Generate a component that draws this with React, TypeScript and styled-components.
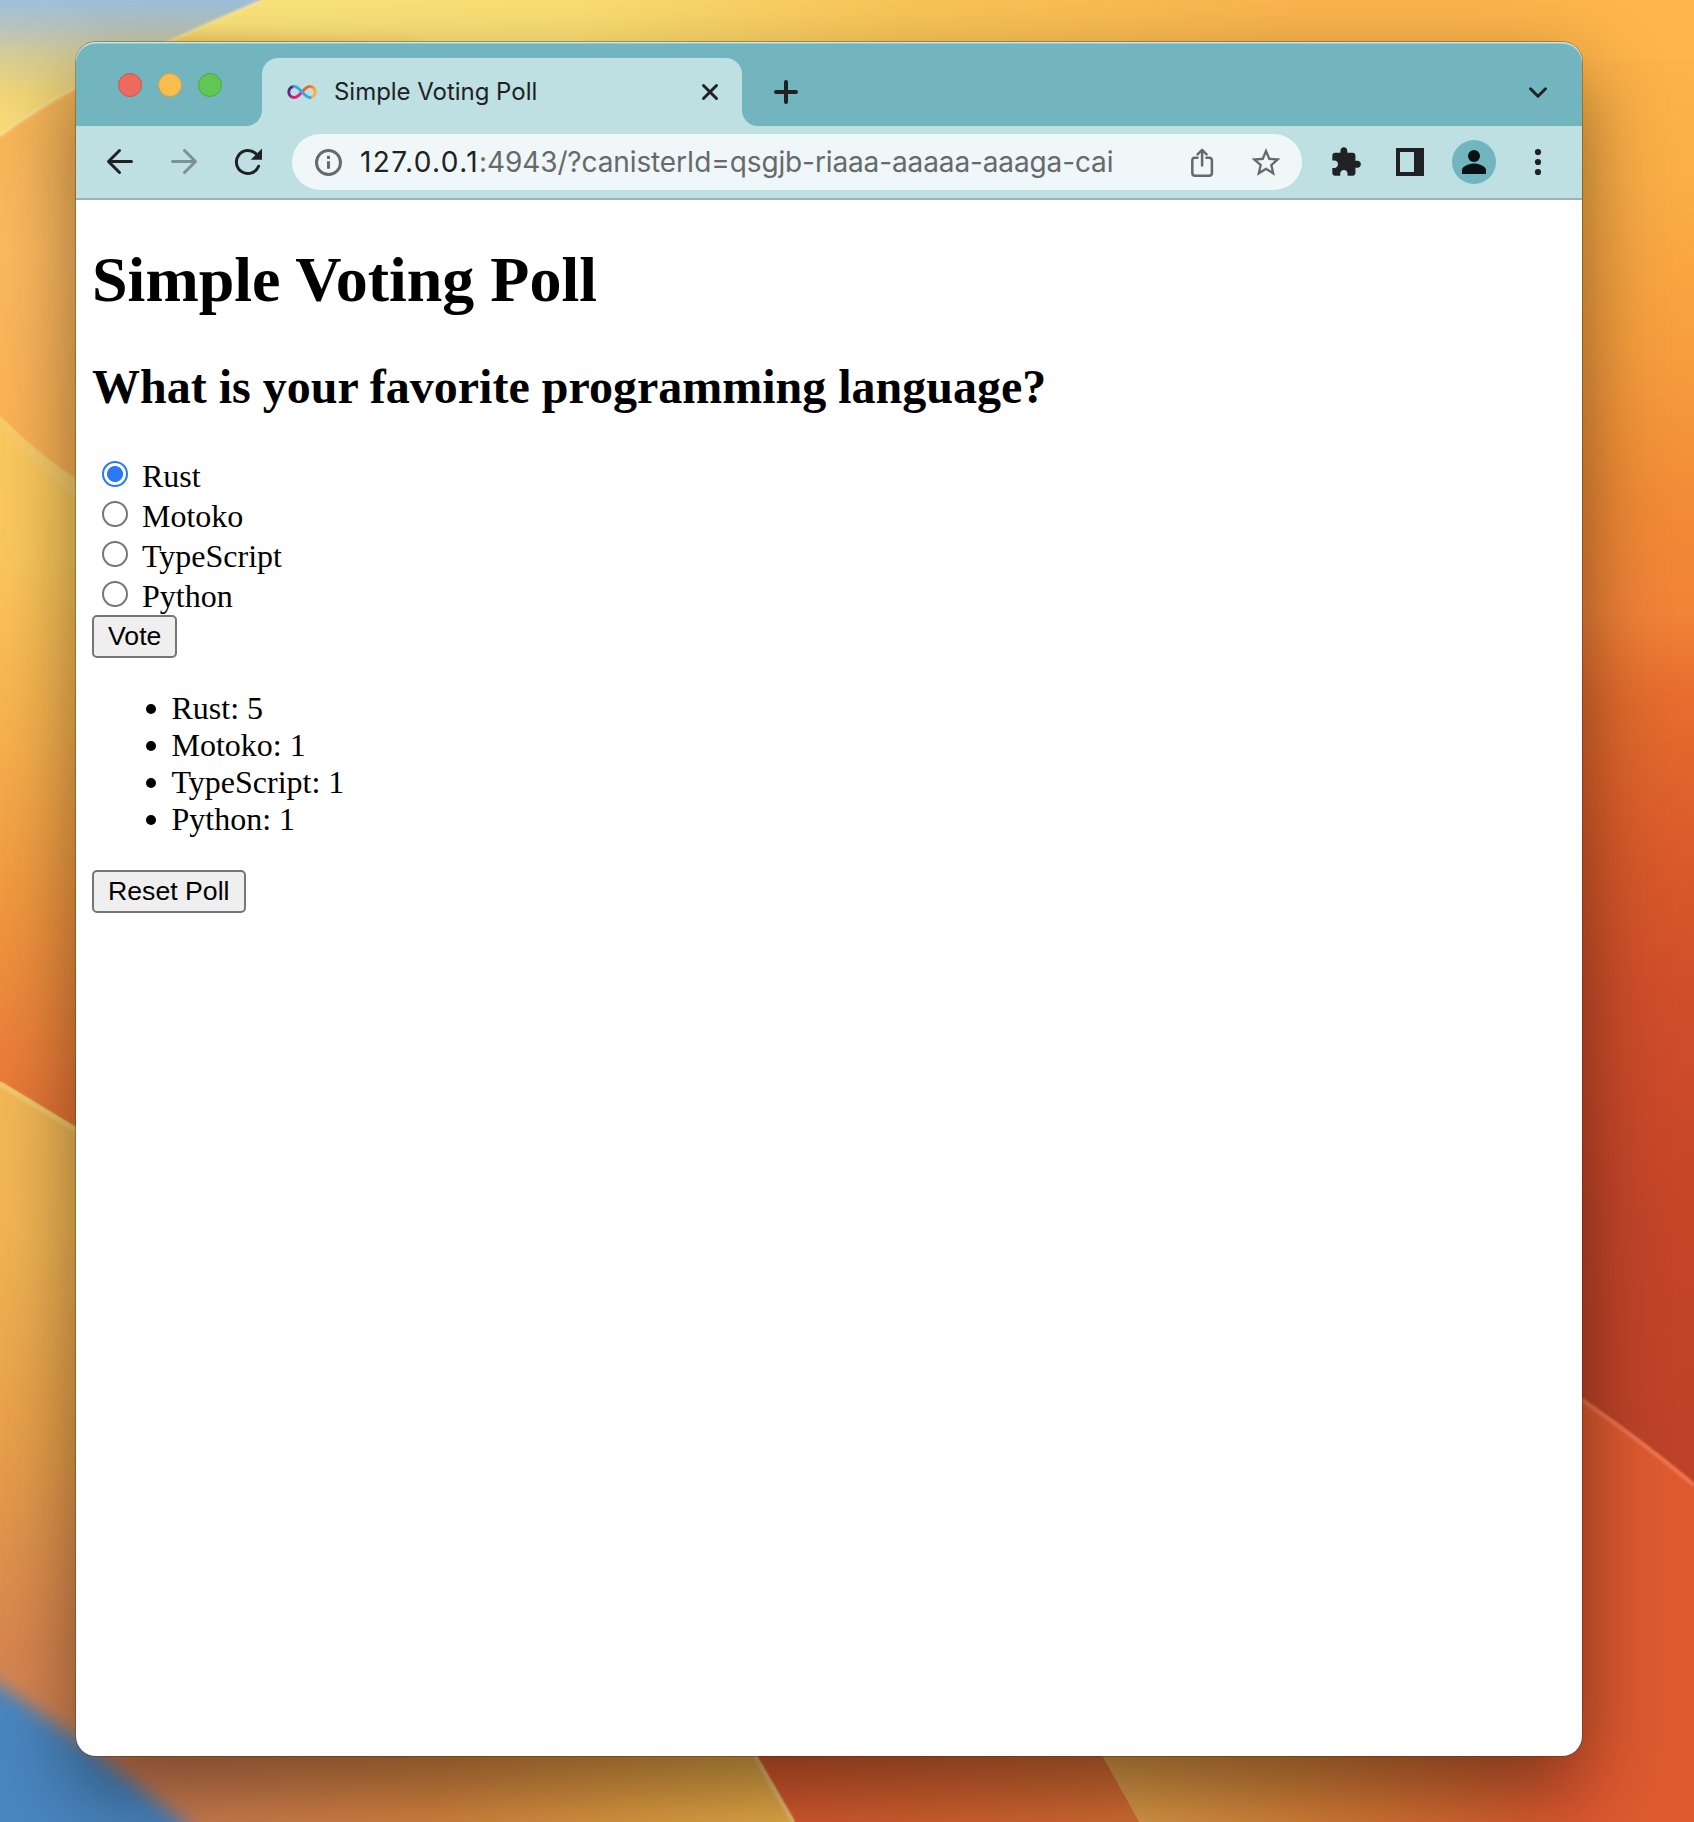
import React, { useState } from "react";
import styled, { createGlobalStyle } from "styled-components";

const SERIF = `"Liberation Serif", "Times New Roman", serif`;
const SANS = `"Liberation Sans", Arial, sans-serif`;
const UI = `Inter, Roboto, sans-serif`;

const color = {
  frame: "#72b5bf",
  toolbar: "#bee0e2",
  field: "#eff7f9",
  ink: "#202124",
  muted: "#67696c",
  line: "#9ab2b9",
};

const GlobalStyle = createGlobalStyle`
  *, *::before, *::after { box-sizing: border-box; }
  body { margin: 0; background: #f2a54a; }
`;

const Desktop = styled.main`
  position: relative;
  width: 1694px;
  height: 1822px;
  padding: 42px 112px 66px 76px;
  overflow: hidden;
`;

const WallpaperSvg = styled.svg`
  position: absolute;
  inset: 0;
  display: block;
`;

const BrowserWindow = styled.section`
  position: relative;
  display: flex;
  flex-direction: column;
  width: 1506px;
  height: 1714px;
  border-radius: 20px;
  background: #fff;
  box-shadow: 0 0 0 1px rgba(70, 45, 0, 0.36), 0 36px 84px rgba(0, 0, 0, 0.46);
`;

const TabStrip = styled.header`
  display: flex;
  height: 84px;
  background: ${color.frame};
  border-radius: 20px 20px 0 0;
  box-shadow: inset 0 1px 0 #c9e6e8, inset 0 2px 0 #96cbd1;
`;

const WindowControls = styled.div`
  display: flex;
  align-items: center;
  gap: 16px;
  width: 186px;
  padding: 2px 0 0 42px;
`;

const Light = styled.span<{ $fill: string; $edge: string }>`
  width: 24px;
  height: 24px;
  border-radius: 50%;
  background: ${(p) => p.$fill};
  border: 1px solid ${(p) => p.$edge};
`;

const Tab = styled.div`
  position: relative;
  display: flex;
  align-items: center;
  width: 480px;
  height: 68px;
  margin-top: 16px;
  padding: 0 12px 0 25px;
  background: ${color.toolbar};
  border-radius: 16px 16px 0 0;

  &::before,
  &::after {
    content: "";
    position: absolute;
    bottom: 0;
    width: 16px;
    height: 16px;
  }
  &::before {
    right: 100%;
    background: radial-gradient(circle at 0 0, transparent 15.5px, ${color.toolbar} 16.5px);
  }
  &::after {
    left: 100%;
    background: radial-gradient(circle at 100% 0, transparent 15.5px, ${color.toolbar} 16.5px);
  }
`;

const TabTitle = styled.span`
  flex: 1;
  margin-left: 17px;
  font: 400 24px/30px ${UI};
  letter-spacing: -0.03px;
  color: ${color.ink};
  white-space: nowrap;
`;

const StripRest = styled.div`
  display: flex;
  flex: 1;
  align-items: center;
  justify-content: space-between;
  padding: 16px 24px 0;
`;

const Toolbar = styled.nav`
  display: flex;
  align-items: center;
  height: 74px;
  padding: 0 12px;
  background: ${color.toolbar};
  border-bottom: 2px solid ${color.line};
`;

const ToolButton = styled.button`
  display: flex;
  align-items: center;
  justify-content: center;
  width: 64px;
  height: 56px;
  padding: 0;
  border: 0;
  background: none;
`;

const AddressBar = styled.div`
  display: flex;
  align-items: center;
  flex: 1;
  height: 56px;
  margin: 0 12px;
  padding: 0 4px 0 16px;
  border-radius: 28px;
  background: ${color.field};
`;

const Address = styled.span`
  flex: 1;
  margin-left: 12px;
  font: 400 28px/36px ${UI};
  letter-spacing: -0.12px;
  color: ${color.muted};
  white-space: nowrap;
`;

const Host = styled.span`
  color: ${color.ink};
  letter-spacing: 1.4px;
`;

const Page = styled.article`
  flex: 1;
  padding: 43px 16px 0;
  font: 32px/37px ${SERIF};
  color: #000;
`;

const Title = styled.h1`
  margin: 0 0 43px;
  font-size: 64px;
  line-height: 74px;
`;

const Question = styled.h2`
  margin: 0 0 40px;
  font-size: 48px;
  line-height: 54px;
`;

const Option = styled.label`
  display: flex;
  align-items: flex-start;
  height: 40px;
  padding: 4px 0 0 10px;
`;

const Radio = styled.input`
  appearance: none;
  flex: none;
  width: 26px;
  height: 26px;
  margin: 3px 14px 0 0;
  border: 2px solid #767676;
  border-radius: 50%;
  background: #fff;

  &:checked {
    border-color: #2a78f6;
    background: radial-gradient(circle, #2a78f6 7.6px, #fff 8.4px);
  }
`;

const PushButton = styled.button`
  display: block;
  height: 43px;
  margin-top: 1px;
  padding: 0 14px 1px;
  border: 2px solid #767676;
  border-radius: 5px;
  background: #efefef;
  color: #000;
  font: 26.667px/36px ${SANS};
`;

const Results = styled.ul`
  margin: 32px 0;
  padding: 0 0 0 54px;
  list-style: none;
`;

const Result = styled.li`
  display: flex;
  align-items: center;
  height: 37px;

  &::before {
    content: "";
    width: 10px;
    height: 10px;
    margin: 1px 15.5px 0 0;
    border-radius: 50%;
    background: #000;
  }
`;

function Wallpaper() {
  return (
    <WallpaperSvg width="1694" height="1822" viewBox="0 0 1694 1822" aria-hidden="true">
      <defs>
        <linearGradient id="sky" x1="0" y1="0" x2="0" y2="120" gradientUnits="userSpaceOnUse">
          <stop offset="0" stopColor="#9dc0dc" />
          <stop offset="0.2" stopColor="#b4c3c0" />
          <stop offset="0.45" stopColor="#d6cc98" />
          <stop offset="0.8" stopColor="#f3d878" />
          <stop offset="1" stopColor="#fbdc78" />
        </linearGradient>
        <linearGradient id="top" x1="200" y1="0" x2="1694" y2="0" gradientUnits="userSpaceOnUse">
          <stop offset="0" stopColor="#fbe57c" />
          <stop offset="0.25" stopColor="#fbdf74" />
          <stop offset="0.47" stopColor="#fac657" />
          <stop offset="0.75" stopColor="#fbb44c" />
          <stop offset="1" stopColor="#feb54b" />
        </linearGradient>
        <linearGradient id="rightSide" x1="0" y1="0" x2="0" y2="1480" gradientUnits="userSpaceOnUse">
          <stop offset="0" stopColor="#feb54b" />
          <stop offset="0.12" stopColor="#fbae47" />
          <stop offset="0.25" stopColor="#f69c3d" />
          <stop offset="0.34" stopColor="#f28b36" />
          <stop offset="0.415" stopColor="#f28338" />
          <stop offset="0.47" stopColor="#e66d2e" />
          <stop offset="0.58" stopColor="#da5a2a" />
          <stop offset="0.67" stopColor="#d14e2a" />
          <stop offset="0.82" stopColor="#c54529" />
          <stop offset="1" stopColor="#bd4227" />
        </linearGradient>
        <linearGradient id="leftUpper" x1="0" y1="100" x2="0" y2="480" gradientUnits="userSpaceOnUse">
          <stop offset="0" stopColor="#f8b757" />
          <stop offset="0.4" stopColor="#feba60" />
          <stop offset="1" stopColor="#fbb153" />
        </linearGradient>
        <linearGradient id="leftMid" x1="0" y1="418" x2="0" y2="1127" gradientUnits="userSpaceOnUse">
          <stop offset="0" stopColor="#fdcb5f" />
          <stop offset="0.2" stopColor="#fdc85c" />
          <stop offset="0.45" stopColor="#f9b24e" />
          <stop offset="0.7" stopColor="#f2973f" />
          <stop offset="0.9" stopColor="#ed803a" />
          <stop offset="1" stopColor="#e67435" />
        </linearGradient>
        <linearGradient id="leftLower" x1="0" y1="1085" x2="0" y2="1822" gradientUnits="userSpaceOnUse">
          <stop offset="0" stopColor="#f4b957" />
          <stop offset="0.2" stopColor="#f3b654" />
          <stop offset="0.48" stopColor="#eaa14a" />
          <stop offset="0.75" stopColor="#da884f" />
          <stop offset="1" stopColor="#d28052" />
        </linearGradient>
        <linearGradient id="bottomWarm" x1="190" y1="0" x2="800" y2="0" gradientUnits="userSpaceOnUse">
          <stop offset="0" stopColor="#d58052" />
          <stop offset="0.4" stopColor="#dc8842" />
          <stop offset="0.75" stopColor="#e5a044" />
          <stop offset="1" stopColor="#eaaf4a" />
        </linearGradient>
        <linearGradient id="bottomRed" x1="760" y1="0" x2="1140" y2="0" gradientUnits="userSpaceOnUse">
          <stop offset="0" stopColor="#da592e" />
          <stop offset="1" stopColor="#d97034" />
        </linearGradient>
        <linearGradient id="bottomRight" x1="1102" y1="0" x2="1560" y2="0" gradientUnits="userSpaceOnUse">
          <stop offset="0" stopColor="#e2a04a" />
          <stop offset="0.35" stopColor="#db8a3c" />
          <stop offset="0.7" stopColor="#da7034" />
          <stop offset="1" stopColor="#df5a30" />
        </linearGradient>
        <filter id="soft" x="-20%" y="-20%" width="140%" height="140%">
          <feGaussianBlur stdDeviation="9" />
        </filter>
        <filter id="edge" x="-20%" y="-20%" width="140%" height="140%">
          <feGaussianBlur stdDeviation="1.2" />
        </filter>
      </defs>
      <rect width="1694" height="1822" fill="url(#rightSide)" />
      <rect width="1694" height="60" fill="url(#top)" />
      <path d="M90 80L170 34L420 46L420 80Z" fill="#edb550" fillOpacity="0.7" filter="url(#soft)" />
      <path d="M0 0H262Q215 20 170 41L75 88Q35 110 0 136Z" fill="url(#sky)" />
      <path d="M0 136Q35 110 75 88L140 60V520H0Z" fill="url(#leftUpper)" />
      <path
        d="M262 0Q215 20 170 41L75 88Q35 110 0 136"
        fill="none"
        stroke="#f7e7a8"
        strokeOpacity="0.65"
        strokeWidth="3"
        filter="url(#edge)"
      />
      <path d="M0 416Q35 452 76 479L140 520V1170H0Z" fill="url(#leftMid)" />
      <path d="M0 416Q35 452 76 479V500Q35 464 0 424Z" fill="#fbce6c" filter="url(#edge)" />
      <path d="M0 1081L76 1127L140 1170V1822H0Z" fill="url(#leftLower)" />
      <path d="M0 1084L76 1130" stroke="#f5d57f" strokeOpacity="0.6" strokeWidth="5" filter="url(#edge)" />
      <path d="M76 1700H757L795 1822H76Z" fill="url(#bottomWarm)" />
      <path d="M725 1700L757 1756L795 1822H1139L1070 1700Z" fill="url(#bottomRed)" />
      <path d="M755 1756L793 1822" stroke="#f0c070" strokeWidth="4" filter="url(#edge)" />
      <path d="M1070 1700L1102 1756L1139 1822H1694V1700Z" fill="url(#bottomRight)" />
      <path d="M1540 1370L1582 1398Q1640 1438 1694 1483V1822H1590L1540 1700Z" fill="#df5a30" />
      <path d="M1582 1400Q1640 1440 1694 1485" fill="none" stroke="#ee7450" strokeWidth="4" filter="url(#edge)" />
      <path d="M-60 1645L0 1685L76 1738L190 1826L190 1880H-60Z" fill="#4a86c0" filter="url(#soft)" />
    </WallpaperSvg>
  );
}

type IconProps = { children: React.ReactNode; size?: number; tone?: string };

const Icon = ({ children, size = 40, tone = color.ink }: IconProps) => (
  <svg
    width={size}
    height={size}
    viewBox="0 0 40 40"
    fill="none"
    stroke={tone}
    strokeWidth="3"
    strokeLinecap="round"
    strokeLinejoin="round"
    aria-hidden="true"
  >
    {children}
  </svg>
);

const Favicon = () => (
  <svg width="30" height="16" viewBox="0 0 30 16" fill="none" strokeWidth="3" aria-hidden="true">
    <defs>
      <linearGradient id="favLeft" x1="2" y1="2" x2="14" y2="14" gradientUnits="userSpaceOnUse">
        <stop offset="0.2" stopColor="#522785" />
        <stop offset="0.75" stopColor="#ed1e79" />
      </linearGradient>
      <linearGradient id="favRight" x1="16" y1="2" x2="28" y2="12" gradientUnits="userSpaceOnUse">
        <stop offset="0.2" stopColor="#f15a24" />
        <stop offset="0.8" stopColor="#fbb03b" />
      </linearGradient>
    </defs>
    <path d="M15 8C12 11.500 10 13.500 7.300 13.500A5.500 5.500 0 0 1 7.300 2.500" stroke="url(#favLeft)" />
    <path d="M15 8C18 4.500 20 2.500 22.700 2.500A5.500 5.500 0 0 1 22.700 13.500" stroke="url(#favRight)" />
    <path d="M5.800 2.700C6.300 2.560 6.800 2.500 7.300 2.500C12.500 2.500 17.500 13.500 22.700 13.500C23.200 13.500 23.700 13.440 24.200 13.300" stroke="#3ea5dd" />
  </svg>
);

const options = [
  { name: "Rust", votes: 5 },
  { name: "Motoko", votes: 1 },
  { name: "TypeScript", votes: 1 },
  { name: "Python", votes: 1 },
];

function Tabs() {
  return (
    <TabStrip>
      <WindowControls>
        <Light $fill="#ee6a5f" $edge="#d1544a" />
        <Light $fill="#f5be4f" $edge="#d6a243" />
        <Light $fill="#62c655" $edge="#4fa842" />
      </WindowControls>
      <Tab>
        <Favicon />
        <TabTitle>Simple Voting Poll</TabTitle>
        <Icon>
          <path d="M13.500 13.500L26.500 26.500M26.500 13.500L13.500 26.500" />
        </Icon>
      </Tab>
      <StripRest>
        <Icon>
          <path d="M20 10V30M10 20H30" strokeWidth="4" />
        </Icon>
        <Icon>
          <path d="M12.500 16.800L20 24.300L27.500 16.800" />
        </Icon>
      </StripRest>
    </TabStrip>
  );
}

function NavigationBar() {
  return (
    <Toolbar>
      <ToolButton aria-label="Back">
        <Icon>
          <path d="M31.500 19.500H9M19.500 8.500L8.500 19.500L19.500 30.500" />
        </Icon>
      </ToolButton>
      <ToolButton aria-label="Forward">
        <Icon tone="#7d9094">
          <path d="M8.500 19.500H31M20.500 8.500L31.500 19.500L20.500 30.500" />
        </Icon>
      </ToolButton>
      <ToolButton aria-label="Reload">
        <Icon>
          <path d="M30.600 24.200A11.500 11.500 0 1 1 28 11.800" />
          <path d="M34 6.500V17.800H22.700Z" fill={color.ink} stroke="none" />
        </Icon>
      </ToolButton>
      <AddressBar>
        <Icon tone={color.muted}>
          <circle cx="20.500" cy="20.500" r="12" />
          <path d="M20.500 19.200V26.800M20.500 13.800V17" strokeLinecap="butt" />
        </Icon>
        <Address>
          <Host>127.0.0.1</Host>:4943/?canisterId=qsgjb-riaaa-aaaaa-aaaga-cai
        </Address>
        <ToolButton aria-label="Share">
          <Icon tone={color.muted}>
            <path
              d="M15.500 15.700H13Q10.300 15.700 10.300 18.400V31Q10.300 33.700 13 33.700H27.200Q29.900 33.700 29.900 31V18.400Q29.900 15.700 27.200 15.700H24.500M20.100 23.500V8M15.600 12.300L20.100 7.800L24.600 12.300"
              strokeWidth="2.500"
            />
          </Icon>
        </ToolButton>
        <ToolButton aria-label="Bookmark">
          <Icon tone="none">
            <g fill={color.muted} transform="translate(2.600 3.200) scale(1.450)">
              <path d="M22 9.240l-7.190-.620L12 2 9.190 8.630 2 9.240l5.460 4.730L5.820 21 12 17.270 18.180 21l-1.630-7.030L22 9.240zM12 15.400l-3.760 2.270 1-4.280-3.320-2.880 4.380-.380L12 6.100l1.710 4.040 4.380.380-3.320 2.880 1 4.280L12 15.400z" />
            </g>
          </Icon>
        </ToolButton>
      </AddressBar>
      <ToolButton aria-label="Extensions">
        <Icon tone="none">
          <g fill={color.ink} transform="translate(3.600 3.900) scale(1.360)">
            <path d="M20.500 11H19V7c0-1.100-.900-2-2-2h-4V3.500C13 2.120 11.880 1 10.500 1S8 2.120 8 3.500V5H4c-1.100 0-1.990.900-1.990 2v3.800H3.500c1.490 0 2.700 1.210 2.700 2.700s-1.210 2.700-2.700 2.700H2V20c0 1.100.900 2 2 2h3.800v-1.500c0-1.490 1.210-2.700 2.700-2.700 1.490 0 2.700 1.210 2.700 2.700V22H17c1.100 0 2-.900 2-2v-4h1.500c1.380 0 2.500-1.120 2.500-2.500S21.880 11 20.500 11z" />
          </g>
        </Icon>
      </ToolButton>
      <ToolButton aria-label="Side panel">
        <Icon tone="none">
          <path d="M6 6H34V34H6ZM10 10V30H24V10Z" fill={color.ink} fillRule="evenodd" />
        </Icon>
      </ToolButton>
      <ToolButton aria-label="Profile">
        <svg width="44" height="44" viewBox="0 0 44 44" aria-hidden="true">
          <circle cx="22" cy="22" r="22" fill={color.frame} />
          <circle cx="22" cy="16" r="6" fill="#081214" />
          <path d="M10 34V30C10 26 18 23.500 22 23.500S34 26 34 30V34Z" fill="#081214" />
        </svg>
      </ToolButton>
      <ToolButton aria-label="Menu">
        <Icon tone="none">
          <g fill={color.ink}>
            <circle cx="20" cy="10" r="3.100" />
            <circle cx="20" cy="20" r="3.100" />
            <circle cx="20" cy="30" r="3.100" />
          </g>
        </Icon>
      </ToolButton>
    </Toolbar>
  );
}

function Poll() {
  const [choice, setChoice] = useState("Rust");
  return (
    <Page>
      <Title>Simple Voting Poll</Title>
      <Question>What is your favorite programming language?</Question>
      {options.map(({ name }) => (
        <Option key={name}>
          <Radio type="radio" name="language" checked={choice === name} onChange={() => setChoice(name)} />
          {name}
        </Option>
      ))}
      <PushButton>Vote</PushButton>
      <Results>
        {options.map(({ name, votes }) => (
          <Result key={name}>
            {name}: {votes}
          </Result>
        ))}
      </Results>
      <PushButton>Reset Poll</PushButton>
    </Page>
  );
}

export default function App() {
  return (
    <Desktop>
      <GlobalStyle />
      <Wallpaper />
      <BrowserWindow>
        <Tabs />
        <NavigationBar />
        <Poll />
      </BrowserWindow>
    </Desktop>
  );
}
